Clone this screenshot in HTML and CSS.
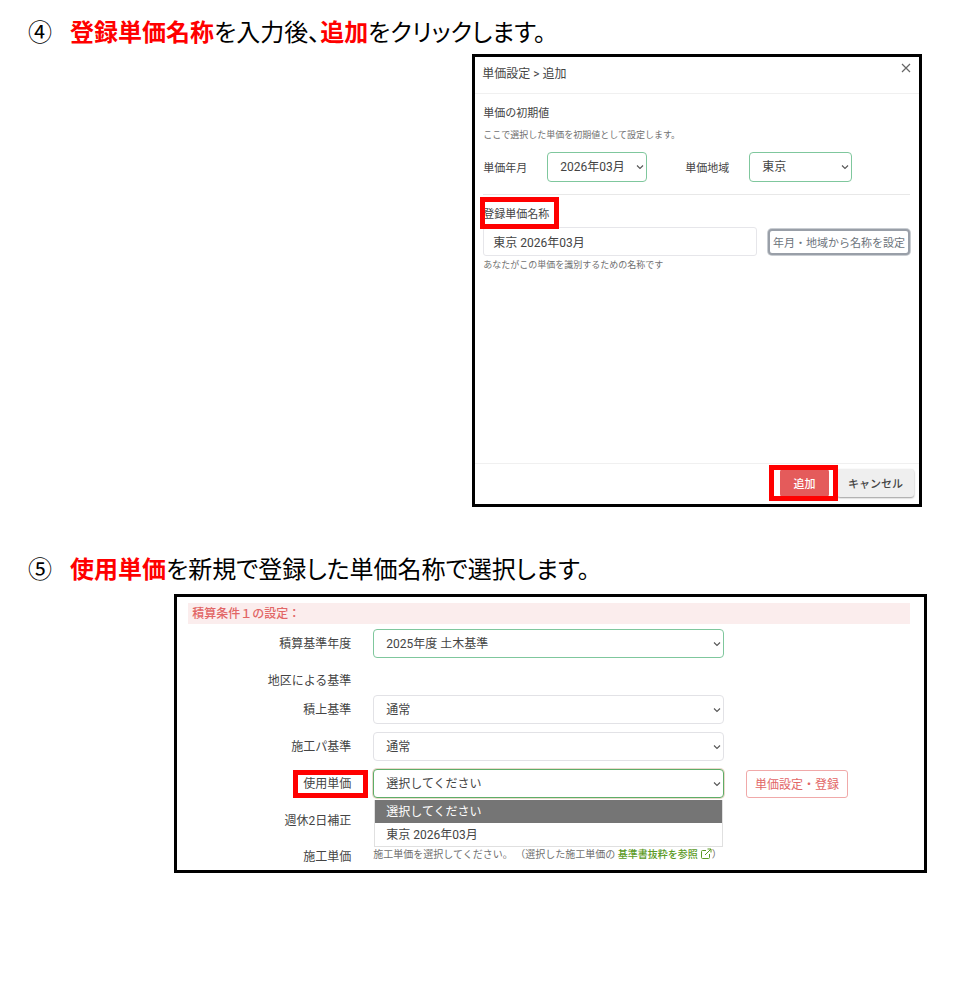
FILE: index.html
```html
<!DOCTYPE html>
<html lang="ja">
<head>
    <meta charset="UTF-8">
    <meta name="viewport" content="width=device-width, initial-scale=1.0">
    <title>単価設定の手順</title>
    <link rel="stylesheet" href="styles.css">
</head>
<body>

<!-- Step 4 -->
<section class="step">
    <h2 class="step-title"><span class="step-number">④</span><span><strong>登録単価名称</strong>を入力後、<strong>追加</strong>をクリックします。</span></h2>

    <div class="frame dialog">
        <div class="dialog-header">
            <span>単価設定 &gt; 追加</span>
            <button type="button" class="close" aria-label="閉じる">
                <svg width="10" height="10" viewBox="0 0 10 10"><path d="M1 1L9 9M9 1L1 9" fill="none" stroke="#666" stroke-width="1.2"/></svg>
            </button>
        </div>

        <div class="dialog-body">
            <h3 class="section-title">単価の初期値</h3>
            <p class="note">ここで選択した単価を初期値として設定します。</p>
            <div class="initial-values">
                <label for="month">単価年月</label>
                <select id="month" class="select valid">
                    <option>2026年03月</option>
                </select>
                <label for="area" class="area-label">単価地域</label>
                <select id="area" class="select valid">
                    <option>東京</option>
                </select>
            </div>
            <hr>
            <label for="priceName" class="name-label mark mark-name">登録単価名称</label>
            <div class="name-row">
                <input type="text" id="priceName" class="name-input" value="東京 2026年03月">
                <button type="button" class="button-set-name">年月・地域から名称を設定</button>
            </div>
            <p class="note name-note">あなたがこの単価を識別するための名称です</p>
        </div>

        <div class="dialog-footer">
            <div class="mark mark-add">
                <button type="button" class="button button-add">追加</button>
            </div>
            <button type="button" class="button button-cancel">キャンセル</button>
        </div>
    </div>
</section>

<!-- Step 5 -->
<section class="step">
    <h2 class="step-title"><span class="step-number">⑤</span><span><strong>使用単価</strong>を新規で登録した単価名称で選択します。</span></h2>

    <div class="frame settings">
        <h3 class="settings-title">積算条件１の設定：</h3>

        <div class="row">
            <label for="year">積算基準年度</label>
            <select id="year" class="select valid">
                <option>2025年度 土木基準</option>
            </select>
        </div>
        <div class="row row-group">
            <span class="row-name">地区による基準</span>
        </div>
        <div class="row">
            <label for="stacking">積上基準</label>
            <select id="stacking" class="select">
                <option>通常</option>
            </select>
        </div>
        <div class="row">
            <label for="package">施工パ基準</label>
            <select id="package" class="select">
                <option>通常</option>
            </select>
        </div>
        <div class="row">
            <label for="price"><span class="mark mark-price">使用単価</span></label>
            <div class="price-select">
                <select id="price" class="select valid open">
                    <option>選択してください</option>
                    <option>東京 2026年03月</option>
                </select>
                <ul class="menu">
                    <li class="selected">選択してください</li>
                    <li>東京 2026年03月</li>
                </ul>
            </div>
            <button type="button" class="button-register">単価設定・登録</button>
        </div>
        <div class="row">
            <span class="row-name">週休2日補正</span>
        </div>
        <div class="row row-last">
            <span class="row-name">施工単価</span>
            <p class="help">施工単価を選択してください。 （選択した施工単価の <a href="#">基準書抜粋を参照<svg class="external" width="12" height="12" viewBox="0 0 12 12"><path d="M6 2.5H2.5Q1.500 2.500 1.500 3.500V9.500Q1.500 10.500 2.500 10.500H8.500Q9.500 10.500 9.500 9.500V6M7.500 1H11V4.500M11 1L5 7" fill="none" stroke="currentColor"/></svg></a>）</p>
        </div>
    </div>
</section>

</body>
</html>
```

FILE: styles.css
```css
* {
    box-sizing: border-box;
}

body {
    margin: 0;
    padding: 13px 0 100px;
    background-color: #fff;
    color: #444;
    font-family: Roboto, "Noto Sans CJK JP", sans-serif;
    font-size: 12px;
}

h2, h3, p, ul {
    margin: 0;
    padding: 0;
}

button, input, select {
    font-family: inherit;
    color: inherit;
}

.step {
    margin-bottom: 43px;
}

.step-title {
    display: flex;
    margin: 0 28px 5px;
    color: #000;
    font-family: "Noto Sans CJK JP", sans-serif;
    font-size: 24px;
    font-weight: 400;
    line-height: 36px;
    font-feature-settings: "palt";
}

.step-title strong {
    color: #f00;
    font-weight: 700;
}

.step-number {
    flex: 0 0 42px;
}

.frame {
    border: 3px solid #000;
    background-color: #fff;
}

/* red boxes drawn around the parts to use */
.mark {
    position: relative;
}

.mark::after {
    content: "";
    position: absolute;
    border: 5px solid #f00;
    pointer-events: none;
}

.mark-name::after {
    inset: -8px -10px -4px -3px;
}

.mark-add::after {
    inset: -4px -9px -4px -11px;
}

.mark-price {
    display: inline-block;
}

.mark-price::after {
    inset: -5px -17px -5px -10px;
}

/* selects */
.select {
    appearance: none;
    width: 100%;
    height: 29px;
    padding: 0 20px 0 12px;
    border: 1px solid #e2e2e6;
    border-radius: 4px;
    background: #fff url("data:image/svg+xml,%3Csvg xmlns='http://www.w3.org/2000/svg' width='8' height='6'%3E%3Cpath d='M1 1.5L4 4.500L7 1.500' fill='none' stroke='%23555' stroke-width='1.100'/%3E%3C/svg%3E") no-repeat right 2px center;
    font-size: 12px;
}

.select.valid {
    border-color: #7fc79d;
}

.select.open {
    border-color: #5ead68;
    box-shadow: 0 0 0 1px #ead9cb;
}

/* dialog */
.dialog {
    margin: 0 36px 0 49.3%;
}

.dialog-header {
    display: flex;
    justify-content: space-between;
    align-items: center;
    height: 37px;
    padding: 0 8px 6px 7px;
    border-bottom: 1px solid #f0f0f0;
}

.close {
    display: flex;
    align-self: flex-start;
    padding: 6px 0;
    border: 0;
    background: none;
}

.dialog-body {
    min-height: 369px;
    padding: 10px 9px 0 8px;
    font-size: 11px;
    line-height: 20px;
}

.section-title {
    font-size: 11px;
    font-weight: 400;
}

.note {
    margin-top: 1px;
    color: #707070;
    font-size: 9px;
}

.initial-values {
    display: grid;
    grid-template-columns: 64px 100px 102px 103px;
    align-items: center;
    height: 30px;
    margin-top: 7px;
}

.initial-values .select {
    height: 30px;
}

.initial-values label {
    padding-top: 3px;
}

.initial-values .area-label {
    padding-left: 38px;
}

hr {
    height: 1px;
    margin: 12px 0 10px;
    border: 0;
    background-color: #e8e8e8;
}

.name-label {
    display: inline-block;
    vertical-align: top;
}

.name-row {
    display: flex;
    align-items: center;
    gap: 11px;
    margin-top: 2px;
}

.name-input {
    flex: 1;
    min-width: 0;
    height: 29px;
    padding: 0 9px;
    border: 1px solid #e6e6ea;
    border-radius: 3px;
    font-size: 12px;
}

.button-set-name {
    height: 26px;
    padding: 0 3px;
    border: 2px solid #999fa8;
    border-radius: 4px;
    box-shadow: 0 0 0 1px #c9cdd2;
    background-color: #fff;
    color: #6c737b;
    font-size: 11px;
    white-space: nowrap;
}

.name-note {
    line-height: 16px;
}

.dialog-footer {
    display: flex;
    justify-content: flex-end;
    gap: 8px;
    padding: 5px 5px 7px;
    border-top: 1px solid #f0f0f0;
}

.button {
    height: 28px;
    border: 0;
    border-radius: 3px;
    font-size: 11px;
    font-weight: 500;
}

.button-add {
    width: 49px;
    background-color: #e45b5b;
    color: #fff;
}

.button-cancel {
    width: 77px;
    background-color: #efefef;
    box-shadow: 0 1px 2px #999;
}

/* settings form */
.settings {
    margin: 8px 31px 0 18.2%;
    padding: 6px 14px 0 11px;
}

.settings-title {
    margin-bottom: 5px;
    padding: 1px 4px 0;
    background-color: #fbeded;
    color: #e26666;
    font-size: 12px;
    font-weight: 500;
    line-height: 20px;
}

.row {
    display: grid;
    grid-template-columns: 163px 1fr 164px;
    column-gap: 22px;
    align-items: center;
    min-height: 29px;
    margin-bottom: 8px;
    line-height: 18px;
}

.row label, .row-name {
    text-align: right;
}

.row-group {
    margin-bottom: 0;
}

.row-last {
    min-height: 27px;
    margin-bottom: 0;
}

.price-select {
    position: relative;
}

.menu {
    position: absolute;
    top: 31px;
    left: 1px;
    right: 1px;
    border: 1px solid #e0e0e0;
    border-top: 0;
    background-color: #fff;
    list-style: none;
    line-height: 22px;
}

.menu li {
    padding: 1px 11px 0;
}

.menu .selected {
    background-color: #757575;
    color: #fff;
}

.button-register {
    justify-self: start;
    height: 28px;
    padding: 0 8px;
    border: 1px solid #f0a9a9;
    border-radius: 3px;
    background-color: #fff;
    color: #e26666;
    font-size: 12px;
}

.help {
    grid-column: 2 / -1;
    align-self: start;
    padding-top: 2px;
    color: #707070;
    font-size: 10px;
    line-height: 20px;
}

.help a {
    color: #5b9a26;
    font-weight: 500;
    text-decoration: none;
}

.external {
    margin-left: 2px;
    vertical-align: -2px;
}
```
